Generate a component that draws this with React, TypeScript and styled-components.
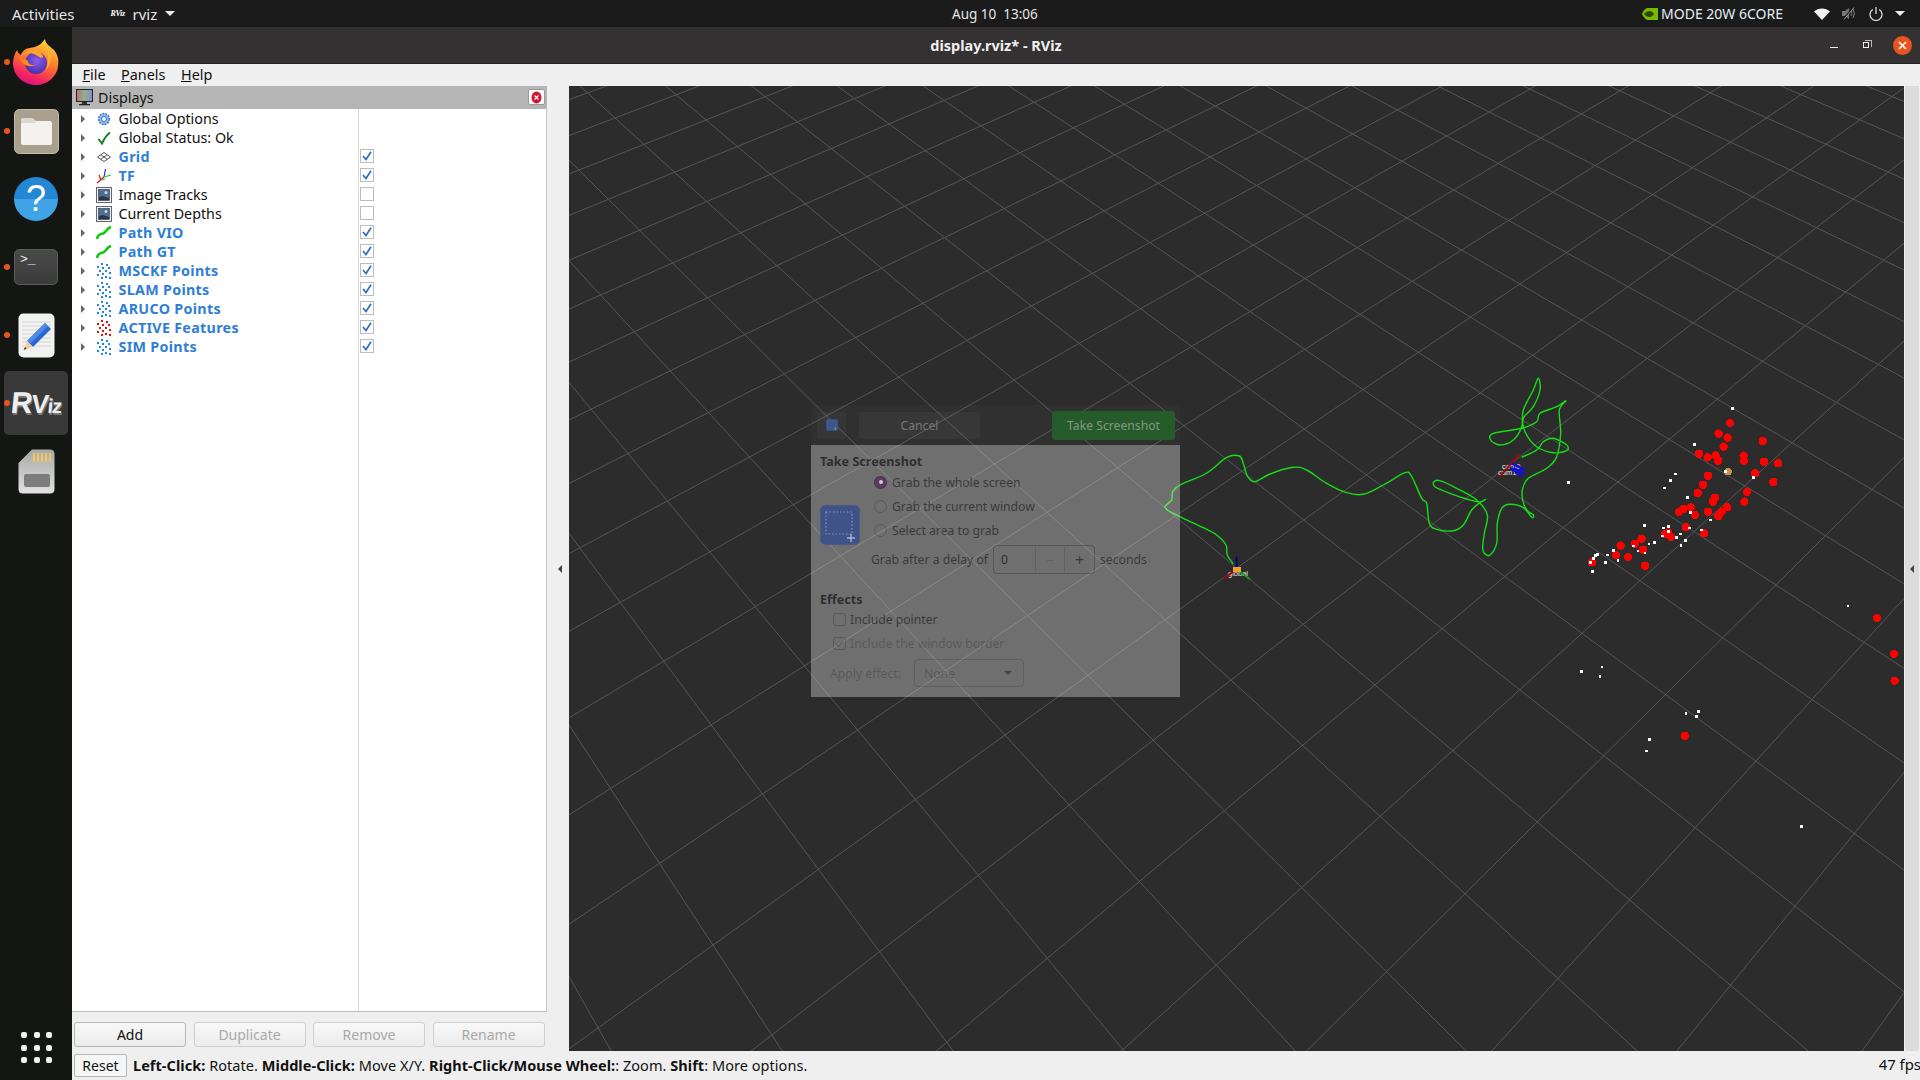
import React from "react";
import styled, { createGlobalStyle } from "styled-components";

const UI = `"Noto Sans", "Liberation Sans", sans-serif`;

const Global = createGlobalStyle`
  html, body { margin: 0; padding: 0; background: #141514; overflow: hidden; }
  * { box-sizing: border-box; }
`;

/* ---------- layout ---------- */
const Screen = styled.div`
  width: 1920px; height: 1080px; display: flex; flex-direction: column;
  font-family: ${UI}; overflow: hidden;
`;
const TopBar = styled.header`
  height: 27px; flex: none; background: #1b1b1b; color: #e6e6e6; display: flex; align-items: center;
  font-size: 15px;
`;
const TopLeft = styled.div`
  flex: 0 0 952px; display: flex; align-items: center; padding-left: 12px;
`;
const AppMenu = styled.div`
  margin-left: 36px; display: flex; align-items: center; gap: 8px;
`;
const TinyLogo = styled.span`
  font: italic bold 8px "Liberation Serif", serif; color: #fff; letter-spacing: -0.3px; width: 14px;
`;
const Caret = styled.span`
  width: 0; height: 0; border-left: 5px solid transparent; border-right: 5px solid transparent;
  border-top: 5px solid #eee;
`;
const Clock = styled.div`white-space: pre; font-size: 13.5px;`;
const TopRight = styled.div`
  margin-left: auto; display: flex; align-items: center; padding-right: 15px;
`;
const ModeText = styled.span`margin: 0 31px 0 3px; font-size: 14px; color: #e4eef8;`;
const TrayGap = styled.span<{ $w: number }>`display: inline-block; width: ${p => p.$w}px;`;

const Body = styled.div`flex: 1; display: flex; min-height: 0;`;
const Dock = styled.nav`
  width: 72px; flex: none; background: #141614; display: flex; flex-direction: column; align-items: center;
  position: relative;
`;
const DockSlot = styled.div<{ $active?: boolean; $h: number }>`
  width: 64px; height: ${p => p.$h}px; flex: none; border-radius: 5px; position: relative;
  display: flex; align-items: center; justify-content: center;
  margin-top: ${p => (p.$active ? 2 : 0)}px;
  background: ${p => (p.$active ? "#393939" : "transparent")};
`;
const RunDot = styled.span`
  position: absolute; left: -0.5px; top: 50%; margin-top: -3px; width: 6px; height: 6px; border-radius: 50%;
  background: #e95420;
`;
const HelpMark = styled.span`
  font: 36px "Liberation Sans", sans-serif; color: #fff;
`;
const HelpIcon = styled.div`
  width: 44px; height: 44px; border-radius: 50%; display: flex; align-items: center; justify-content: center;
  background: linear-gradient(#2387d6 0 50%, #3fa3e6 50% 100%);
`;
const TermIcon = styled.div`
  width: 44px; height: 36px; border-radius: 5px; background: linear-gradient(#4a4a4a, #3a3a3a);
  border: 1px solid #5a5a5a; color: #eee; font: 13px/16px "Liberation Mono", monospace; padding: 2px 5px;
`;
const RvizLogo = styled.div`
  display: flex; align-items: baseline; color: #eee; font-family: "Liberation Sans", sans-serif; font-weight: bold;
  transform: skewX(-6deg); text-shadow: 1px 2px 0 #777;
`;
const RvizPart = styled.span<{ $s: number }>`font-size: ${p => p.$s}px; line-height: 1; letter-spacing: -1px;`;
const AppsGrid = styled.div`
  position: absolute; left: 21px; top: 1005px; display: grid; grid-template-columns: repeat(3, 6px); gap: 6.5px;
`;
const AppDot = styled.span`width: 6px; height: 6px; border-radius: 2px; background: #f2f2f2;`;

const Win = styled.div`flex: 1; display: flex; flex-direction: column; min-width: 0; background: #efefef;`;
const TitleBar = styled.div`
  height: 37px; flex: none; background: #333132; border-bottom: 1px solid #222; color: #f0f0f0;
  font-size: 14.5px; font-weight: bold; display: flex; align-items: center; justify-content: center; position: relative;
`;
const WinButtons = styled.div`
  position: absolute; right: 8px; top: 0; height: 36px; display: flex; align-items: center; gap: 0;
`;
const MinBtn = styled.span`width: 8px; height: 1.5px; background: #eee; margin: 5px 25px 0 0;`;
const RestoreBtn = styled.span`
  width: 6px; height: 6px; border: 1px solid #eee; margin: 0 24px 0 0; position: relative;
  &::after { content: ""; position: absolute; left: 1px; top: -3px; width: 6px; height: 6px;
    border-top: 1px solid #bbb; border-right: 1px solid #bbb; }
`;
const CloseBtn = styled.span`
  width: 19px; height: 19px; border-radius: 50%; background: #e95420; display: flex; align-items: center; justify-content: center;
`;
const MenuBar = styled.div`
  height: 22px; flex: none; display: flex; align-items: center; gap: 15.5px; padding: 0 0 2px 10.5px; font-size: 14.4px;
  color: #111; background: #efefef;
`;
const Mnemonic = styled.span`text-decoration: underline;`;
const Main = styled.div`flex: 1; display: flex; min-height: 0;`;

const LeftPanel = styled.aside`
  width: 475px; flex: none; display: flex; flex-direction: column; background: #efefef;
`;
const PanelHead = styled.div`
  height: 23px; flex: none; background: #b5b5b5; display: flex; align-items: center; padding: 0 2px 1px 4px; gap: 5px;
  font-size: 14.3px; color: #111;
`;
const PanelClose = styled.span`
  margin-left: auto; width: 17px; height: 16px; background: #fff; border: 1px solid #9a9a9a; border-radius: 2px;
  display: flex; align-items: center; justify-content: center;
`;
const Tree = styled.div`
  flex: 1; background: #fff; border-right: 1px solid #c8c8c8; border-bottom: 1px solid #bdbdbd; position: relative;
  &::after { content: ""; position: absolute; left: 286px; top: 0; bottom: 0; width: 1px; background: #dcdcdc; }
`;
const Row = styled.div`height: 19px; display: flex; align-items: center; position: relative;`;
const Arrow = styled.span`
  margin-left: 9px; width: 0; height: 0; border-top: 4px solid transparent; border-bottom: 4px solid transparent;
  border-left: 4.5px solid #666; flex: none;
`;
const RowIcon = styled.span`
  margin-left: 10px; width: 18px; height: 18px; flex: none; display: flex; align-items: center; justify-content: center;
`;
const RowName = styled.span<{ $on: boolean }>`
  margin-left: 5.5px; width: 239px; font-size: 14.3px; white-space: nowrap;
  font-weight: ${p => (p.$on ? 700 : 400)}; color: ${p => (p.$on ? "#2f7ed4" : "#111")};
  letter-spacing: ${p => (p.$on ? "0.3px" : "0")};
`;
const Check = styled.span`
  width: 14px; height: 14px; margin: -1px 0 0 2px; border: 1px solid #bcbcbc; background: #fff; display: flex; align-items: center; justify-content: center;
  flex: none;
`;
const ButtonRow = styled.div`
  height: 39px; flex: none; display: flex; gap: 7.5px; padding: 10px 0 4px 2px;
`;
const PanelButton = styled.button<{ $off?: boolean }>`
  width: 112px; height: 25px; border: 1px solid ${p => (p.$off ? "#cfcfcf" : "#b5b5b5")}; border-radius: 3px;
  background: linear-gradient(#f8f8f8, #ececec); font: 14px ${UI}; color: ${p => (p.$off ? "#a9a9a9" : "#111")}; padding: 0;
`;
const Sash = styled.div`
  width: 22px; flex: none; display: flex; align-items: center; justify-content: center; background: #efefef; padding-left: 4px;
`;
const SashArrow = styled.span`
  width: 0; height: 0; border-top: 4px solid transparent; border-bottom: 4px solid transparent; border-right: 4px solid #444;
`;
const Viewport = styled.main`
  width: 1335px; flex: none; background: #2c2c2c; position: relative; overflow: hidden;
`;
const Scene = styled.svg`display: block; width: 1335px; height: 965px;`;
const RightSash = styled.div`
  flex: 1; background: #dcdcdc; margin-left: 1px; border-radius: 0 0 3px 3px; display: flex; align-items: center; justify-content: center;
  border-right: 1px solid #efefef;
`;
const StatusBar = styled.footer`
  height: 29px; flex: none; display: flex; align-items: center; padding: 0 0 2px 2px; font-size: 14.5px; color: #111; background: #efefef;
`;
const ResetBtn = styled.button`
  width: 53px; height: 23px; border: 1px solid #b5b5b5; border-radius: 2px; background: #f6f6f6;
  font: 14px ${UI}; color: #111; padding: 0; margin-top: 2px;
`;
const StatusText = styled.span`margin-left: 6px; letter-spacing: 0.05px; white-space: pre;`;
const Fps = styled.span`margin: 0 -1px 2px auto; font-size: 14.9px;`;

/* ---------- fading screenshot dialog, lying over the scene ---------- */
const Dialog = styled.section`
  position: absolute; left: 242px; top: 319px; width: 369px; height: 292px; display: flex; flex-direction: column;
  font-size: 12.2px;
`;
const DlgHead = styled.div`
  height: 40px; flex: none; background: rgba(255,255,255,0.025); display: flex; align-items: center; padding: 0 5px 0 6px;
  border-radius: 6px 6px 0 0;
`;
const DlgIconBtn = styled.div`
  width: 29px; height: 27px; background: rgba(255,255,255,0.03); border-radius: 3px; display: flex; align-items: center; justify-content: center;
`;
const DlgCancel = styled.div`
  margin-left: 13px; width: 121px; height: 27px; background: rgba(255,255,255,0.035); border-radius: 3px;
  color: #777; display: flex; align-items: center; justify-content: center;
`;
const DlgTake = styled.div`
  margin-left: auto; width: 123px; height: 29px; background: #255a2a; border-radius: 3px;
  color: #7f9a80; display: flex; align-items: center; justify-content: center;
`;
const DlgBody = styled.div`
  flex: 1; background: rgba(240,240,240,0.34); padding: 7px 0 0 9px; color: rgba(0,0,0,0.5); position: relative;
`;
const DlgHeading = styled.div`font-weight: 700; font-size: 12.6px; height: 19px; line-height: 19px; color: rgba(0,0,0,0.6);`;
const DlgTop = styled.div`display: flex; margin-top: -1px;`;
const DlgLargeIcon = styled.div`width: 40px; height: 40px; margin-top: 35px; flex: none;`;
const DlgOptions = styled.div`margin-left: 14px; display: flex; flex-direction: column;`;
const RadioRow = styled.div`height: 24px; display: flex; align-items: center; gap: 5px; margin-left: 0;`;
const Radio = styled.span<{ $on?: boolean }>`
  width: 13px; height: 13px; border-radius: 50%; border: 1px solid rgba(0,0,0,${p => (p.$on ? 0.2 : 0.18)});
  background: ${p => (p.$on ? "#5c3a5f" : "transparent")}; display: flex; align-items: center; justify-content: center;
  &::after { content: ""; width: 4px; height: 4px; border-radius: 50%; background: ${p => (p.$on ? "#d8c8d8" : "transparent")}; }
`;
const DelayRow = styled.div`display: flex; align-items: center; height: 29px; margin: 3px 0 0 -3px; gap: 5px; font-size: 12.2px;`;
const Spin = styled.div`
  width: 102px; height: 29px; border: 1px solid rgba(0,0,0,0.22); border-radius: 4px; display: flex; align-items: center;
`;
const SpinValue = styled.span`width: 41px; padding-left: 7px; color: rgba(0,0,0,0.6);`;
const SpinBtn = styled.span<{ $off?: boolean }>`
  width: 30px; height: 100%; border-left: 1px solid rgba(0,0,0,0.1); display: flex; align-items: center; justify-content: center;
  font-size: 16px; color: rgba(0,0,0,${p => (p.$off ? 0.12 : 0.5)});
`;
const EffectsHead = styled(DlgHeading)`margin-top: 16px; height: 17px;`;
const CheckRow = styled.div<{ $off?: boolean }>`
  height: 24px; display: flex; align-items: center; gap: 4px; margin-left: 13px;
  color: rgba(0,0,0,${p => (p.$off ? 0.22 : 0.5)});
`;
const DlgCheck = styled.span`
  width: 13px; height: 13px; border: 1px solid rgba(0,0,0,0.2); border-radius: 3px; display: flex; align-items: center; justify-content: center;
`;
const EffectRow = styled.div`
  display: flex; align-items: center; gap: 13px; margin: 4px 0 0 10px; color: rgba(0,0,0,0.22);
`;
const EffectSelect = styled.div`
  width: 110px; height: 28px; border: 1px solid rgba(0,0,0,0.14); border-radius: 4px; display: flex; align-items: center;
  padding: 0 11px 0 9px; justify-content: space-between;
`;
const SelectCaret = styled.span`
  width: 0; height: 0; border-left: 4px solid transparent; border-right: 4px solid transparent; border-top: 4px solid rgba(0,0,0,0.4);
`;

/* ---------- scene geometry ---------- */
const gridRefs: number[][] = [
  [1, 0, 1246.7, 386.7], [0, 0, 1183.3, 425], [0, 3, 1370, 571.7], [2, 4, 1563.3, 528.3], [1, 4, 1503.3, 576.7],
  [0, 5, 1520, 690], [0, 6, 1604, 756], [0, 7, 1696, 828.3], [0, 8, 1795.5, 906],
  [1, 6, 1665, 694.3], [1, 7, 1755.6, 761.7], [2, 7, 1812, 700], [1, 8, 1854.3, 833.3],
  [-1, 5, 1452.5, 750.7], [-1, 6, 1537.5, 821.7], [-1, 7, 1630.2, 900], [-1, 8, 1730.3, 985],
  [-2, 5, 1380.4, 816.7], [-2, 6, 1465, 894], [-2, 7, 1558, 978.3],
  [-3, 5, 1302, 887], [-3, 6, 1386, 971.7], [-4, 5, 1216, 965],
  [-1, 4, 1374.5, 684.3], [-2, 4, 1302, 745], [-3, 4, 1223.9, 810.7], [-2, 3, 1230.8, 680],
  [-1, -2, 1013.4, 380], [-2, -3, 898.7, 376.7], [-3, -4, 784.8, 374], [-4, -5, 670, 371],
  [0, -2, 1079, 343.3], [-1, -3, 967.4, 340.7], [-2, -4, 856, 337], [-3, -5, 744.6, 335], [-4, -6, 634.8, 331.7],
  [0, -3, 1031, 306], [-1, -4, 922.8, 302.7], [-2, -5, 815.6, 300.7], [-3, -6, 707.6, 297.7], [-4, -7, 600.4, 295.7],
  [1, -3, 1092.9, 273.3], [0, -4, 986.6, 271], [-1, -5, 881.7, 268.3], [-2, -6, 776.8, 266], [-3, -7, 672.8, 263.3],
  [1, -4, 1046.9, 240], [0, -5, 944.2, 237.3], [-1, -6, 843.8, 234.3], [-2, -7, 741, 232.7], [-3, -8, 639.3, 230],
  [1, -5, 1004.5, 208.3], [0, -6, 905, 206.7], [-1, -7, 805.8, 204], [-2, -8, 706.7, 202.3], [-3, -9, 607, 199.3],
  [2, -5, 1060, 181], [1, -6, 964.3, 179], [0, -7, 867, 176.7], [-1, -8, 770, 174.3], [-2, -9, 674, 171.7],
];

function fitHomography(): number[] {
  const n = 8;
  const A = Array.from({ length: n }, () => new Array(n + 1).fill(0));
  const add = (r: number[], b: number) => {
    for (let i = 0; i < n; i++) {
      for (let j = 0; j < n; j++) A[i][j] += r[i] * r[j];
      A[i][n] += r[i] * b;
    }
  };
  for (const [u0, v0, x0, y0] of gridRefs) {
    const U = u0 / 10, V = v0 / 10, X = (x0 - 1200) / 500, Y = (y0 - 500) / 500;
    add([U, V, 1, 0, 0, 0, -X * U, -X * V], X);
    add([0, 0, 0, U, V, 1, -Y * U, -Y * V], Y);
  }
  for (let c = 0; c < n; c++) {
    let p = c;
    for (let r = c + 1; r < n; r++) if (Math.abs(A[r][c]) > Math.abs(A[p][c])) p = r;
    [A[c], A[p]] = [A[p], A[c]];
    for (let r = 0; r < n; r++) {
      if (r === c) continue;
      const f = A[r][c] / A[c][c];
      for (let k = c; k <= n; k++) A[r][k] -= f * A[c][k];
    }
  }
  return A.map((row, i) => row[n] / row[i]);
}
const H = fitHomography();
function project(u: number, v: number): [number, number] | null {
  const U = u / 10, V = v / 10;
  const w = H[6] * U + H[7] * V + 1;
  if (w < 0.03) return null;
  return [((H[0] * U + H[1] * V + H[2]) / w) * 500 + 1200, ((H[3] * U + H[4] * V + H[5]) / w) * 500 + 500];
}
function gridLines(): number[][] {
  const out: number[][] = [];
  const inside = (p: [number, number] | null): p is [number, number] =>
    !!p && p[0] > 300 && p[0] < 2200 && p[1] > -100 && p[1] < 1300;
  const trace = (at: (t: number) => [number, number] | null) => {
    let a: [number, number] | null = null, b: [number, number] | null = null;
    for (let t = -80; t <= 80; t += 0.1) {
      const p = at(t);
      if (inside(p)) { if (!a) a = p; b = p; }
    }
    if (a && b && a !== b) out.push([a[0], a[1], b[0], b[1]]);
  };
  for (let k = -50; k <= 50; k++) {
    trace(t => project(k, t));
    trace(t => project(t, k));
  }
  return out;
}
const LINES = gridLines();

const z5 = (x: number, y: number): [number, number] => [1150 + x / 3, 360 + y / 3];
const pathRaw: number[][] = [
  [250,612],[232,585],[228,555],[200,525],[160,503],[100,475],[60,455],[45,440],[65,420],[68,395],[90,375],[160,345],[190,325],[230,292],[268,288],[280,310],[293,350],[315,365],[360,342],[430,322],[470,330],[530,370],[590,398],[640,403],[700,375],[765,338],[785,350],[815,415],[830,430],[838,490],[860,508],[910,512],[940,495],[965,450],[990,428],[1007,418],[990,426],[960,420],[900,400],[855,380],[852,365],[870,362],[920,385],[980,420],[1012,465],[1003,520],[998,560],[1003,580],[1020,585],[1040,550],[1042,490],[1055,445],[1080,433],[1120,443],[1145,472],[1150,465],[1130,450],[1118,420],[1118,385],[1135,355],[1190,325],[1220,290],[1232,220],[1228,150],[1248,122],[1220,140],[1170,160],[1160,185],[1115,205],[1030,220],[1022,240],[1050,255],[1090,240],[1115,200],[1120,150],[1150,90],[1165,55],[1170,90],[1150,140],[1120,175],[1125,215],[1160,260],[1210,278],[1250,272],[1250,255],[1210,235],[1180,245],[1160,270],[1115,292],
];
function smoothPath(pts: [number, number][]): string {
  let d = `M${pts[0][0]} ${pts[0][1]}`;
  for (let i = 0; i < pts.length - 1; i++) {
    const p0 = pts[Math.max(0, i - 1)], p1 = pts[i], p2 = pts[i + 1], p3 = pts[Math.min(pts.length - 1, i + 2)];
    const c1 = [p1[0] + (p2[0] - p0[0]) / 6, p1[1] + (p2[1] - p0[1]) / 6];
    const c2 = [p2[0] - (p3[0] - p1[0]) / 6, p2[1] - (p3[1] - p1[1]) / 6];
    d += ` C${c1[0].toFixed(1)} ${c1[1].toFixed(1)} ${c2[0].toFixed(1)} ${c2[1].toFixed(1)} ${p2[0].toFixed(1)} ${p2[1].toFixed(1)}`;
  }
  return d;
}
const GREEN_PATH = smoothPath(pathRaw.map(([x, y]) => z5(x, y)));

const z6 = ([x, y]: number[]): number[] => [1560 + x / 3, 390 + y / 3];
const RED: number[][] = [
  ...[[510,99],[476,131],[503,143],[608,153],[491,170],[417,191],[443,202],[467,196],[474,212],[551,197],[552,213],[612,215],[654,220],[585,250],[640,276],[444,257],[429,284],[413,309],[561,306],[553,335],[465,323],[459,335],[501,352],[485,365],[478,373],[475,378],[392,352],[370,357],[357,366],[405,375],[444,365],[378,412],[432,430],[325,428],[315,433],[333,441],[245,446],[225,461],[182,467],[249,479],[168,495],[204,501],[96,517],[255,527]].map(z6),
  [1877, 618], [1894, 654], [1894.6, 680.7], [1685, 735.7],
];
const WHITE: number[][] = [
  ...[[517,55],[403,163],[346,252],[332,271],[313,294],[25,277],[383,323],[392,368],[452,390],[253,406],[311,414],[325,409],[388,414],[362,432],[376,451],[363,466],[349,442],[307,438],[283,458],[267,462],[220,468],[234,483],[255,489],[160,482],[142,495],[112,493],[106,497],[100,505],[91,517],[137,517],[174,511],[97,544],[580,263],[424,420],[325,424],[497,244]].map(z6),
  [1581.5,671.3],[1602,666.7],[1600,676.3],[1686,713.3],[1698.6,711.3],[1696.3,716.3],[1649.5,739.3],[1646.3,750.7],[1801.5,826.3],[1848,606],
];

/* ---------- small drawings ---------- */
const PointsIcon = ({ c }: { c: string }) => {
  const dots = [[6,1],[11,2],[2,4],[7,5],[13,5],[4,8],[10,8],[14,10],[7,11],[2,12],[10,14],[6,15],[14,15]];
  return (
    <svg width="16" height="16" viewBox="0 0 16 16" shapeRendering="crispEdges">
      {dots.map(([x, y], i) => <rect key={i} x={x - 1} y={y - 1} width="2" height="2" fill={c} />)}
    </svg>
  );
};
const PathIcon = () => (
  <svg width="16" height="14" viewBox="0 0 16 14"><path d="M1 13 C2 7 5 9 8 7 C11 5 11 2 15 1" fill="none" stroke="#10c810" strokeWidth="2.6" /></svg>
);
const ImageIcon = () => (
  <svg width="16" height="16" viewBox="0 0 16 16">
    <rect x="0.5" y="0.5" width="15" height="15" fill="#eef" stroke="#666" />
    <rect x="2.5" y="2.5" width="11" height="11" fill="#4d6f96" stroke="#333" strokeWidth="0.6" />
    <path d="M3 13 L3 10 L7 9 L13 11 L13 13 Z" fill="#2c3645" />
    <circle cx="10" cy="5.5" r="1.5" fill="#c9d6e6" />
  </svg>
);
const GridIcon = () => (
  <svg width="14" height="10" viewBox="0 0 14 10" fill="none" stroke="#555">
    <path d="M7 .5 13.5 5 7 9.5 .5 5Z M3.7 2.8 10.3 7.2 M10.3 2.8 3.7 7.2" />
  </svg>
);
const TfIcon = () => (
  <svg width="16" height="16" viewBox="0 0 16 16" fill="none" strokeWidth="1.2">
    <path d="M8 9 L9.5 1" stroke="#2222dd" /><path d="M8 9 L15 7" stroke="#22c822" />
    <path d="M8 9 L1 15" stroke="#e01010" /><path d="M3 7 L5 12" stroke="#e01010" /><path d="M5 12 L9 11" stroke="#22c822" />
  </svg>
);
const GearIcon = () => (
  <svg width="14" height="14" viewBox="0 0 14 14">
    <circle cx="7" cy="7" r="5.4" fill="#9dbbea" stroke="#3f78cc" strokeWidth="1.6" strokeDasharray="1.9 1" />
    <circle cx="7" cy="7" r="2.6" fill="#e6eefb" stroke="#3f78cc" />
  </svg>
);
const CheckMark = () => (
  <svg width="14" height="14" viewBox="0 0 14 14"><path d="M1.5 8 L5 12.5 C7 8 9 4.5 13 1.5" fill="none" stroke="#1f7a2a" strokeWidth="2" /></svg>
);
const BoxTick = () => (
  <svg width="10" height="10" viewBox="0 0 10 10"><path d="M1 5 L4 8.5 L9 .8" fill="none" stroke="#2f6fb5" strokeWidth="1.7" /></svg>
);
const Monitor = () => (
  <svg width="17" height="17" viewBox="0 0 17 17">
    <defs>
      <linearGradient id="mon" x1="0" x2="1" y1="0" y2="0">
        <stop offset="0" stopColor="#c87070" /><stop offset=".5" stopColor="#8fb08f" /><stop offset="1" stopColor="#8a88d8" />
      </linearGradient>
    </defs>
    <rect x=".5" y=".5" width="16" height="12" fill="url(#mon)" stroke="#222" />
    <rect x="6" y="13" width="5" height="2" fill="#333" /><rect x="3" y="15" width="11" height="1.3" fill="#222" />
  </svg>
);
const Firefox = () => (
  <svg width="46" height="46" viewBox="0 0 46 46">
    <defs>
      <linearGradient id="ffA" x1=".7" y1="0" x2=".3" y2="1">
        <stop offset="0" stopColor="#ffd53a" /><stop offset=".45" stopColor="#ff7a2a" /><stop offset=".8" stopColor="#f5255f" /><stop offset="1" stopColor="#d40f8a" />
      </linearGradient>
      <radialGradient id="ffB" cx=".55" cy=".4" r=".7">
        <stop offset="0" stopColor="#8e5be8" /><stop offset="1" stopColor="#3a2aa6" />
      </radialGradient>
    </defs>
    <path d="M32 0 C33 6 37 7 41 11 C45 16 46 21 45 27 C44 38 34 46 23 46 C10 46 0 36 0 24 C0 19 2 14 4 11 C5 14 6 15 8 16 C9 12 13 9 17 9 C23 8 27 7 32 0Z" fill="url(#ffA)" />
    <circle cx="23" cy="24" r="11" fill="url(#ffB)" />
    <path d="M6 19 C10 14 18 13 23 16 C27 18 30 21 30 17 C28 13 25 12 20 12 C15 12 9 14 6 19Z" fill="#ffa52e" />
    <path d="M6 18 C10 20 13 20 15 22 C15 26 20 27 24 25 C20 28 13 28 10 24 C8 22 7 20 6 18Z" fill="#ff8a1f" />
    <path d="M33 8 C40 14 38 26 33 31 C36 23 36 15 33 8Z" fill="#ffb32b" />
  </svg>
);
const Files = () => (
  <svg width="45" height="45" viewBox="0 0 45 45">
    <rect x=".5" y=".5" width="44" height="44" rx="5" fill="#a89f8c" stroke="#c4bcab" />
    <path d="M7 12 Q7 9 10 9 H18 L22 12 H36 Q38 12 38 14 V34 Q38 36 36 36 H9 Q7 36 7 34Z" fill="#f4f2ee" />
    <path d="M7 12 Q7 9 10 9 H18 L22 12 L21 14 H7Z" fill="#dcd8cf" />
  </svg>
);
const Editor = () => (
  <svg width="37" height="45" viewBox="0 0 37 45">
    <rect x=".5" y=".5" width="36" height="44" rx="5" fill="#f2f2f2" />
    <path d="M4 9H33M4 13H33M4 17H33M4 21H33M4 25H33M4 29H33M4 33H33" stroke="#d4d4d4" />
    <path d="M27 10 L33 16 L15 34 L9 28Z" fill="#2a66d0" />
    <path d="M27 10 L30 13 L12 31 L9 28Z" fill="#4c8ae8" />
    <path d="M9 28 L15 34 L6 37Z" fill="#f2cfa0" /><path d="M7 34 L8.5 35.8 L5.5 37Z" fill="#333" />
  </svg>
);
const SdCard = () => (
  <svg width="37" height="45" viewBox="0 0 37 45">
    <defs><linearGradient id="sd" x1="0" y1="0" x2="0" y2="1"><stop offset="0" stopColor="#a8a8a8" /><stop offset="1" stopColor="#e2e2e2" /></linearGradient></defs>
    <path d="M14 .5 H32 Q36.5 .5 36.5 5 V40 Q36.5 44.5 32 44.5 H5 Q.5 44.5 .5 40 V14Z" fill="url(#sd)" />
    <path d="M16 4V13M20 4V13M24 4V13M28 4V13M32 4V13" stroke="#f0c95a" strokeWidth="2" />
    <rect x="6" y="25" width="26" height="13" rx="2" fill="#7c7c7c" />
  </svg>
);
const Nvidia = () => (
  <svg width="16" height="12" viewBox="0 0 16 12">
    <path d="M5 0 H16 V12 H5 C2 10 1 8 0 6 C1 3 3 1 5 0Z" fill="#76b900" />
    <path d="M2 6 C5 2 10 2 12 6 C10 10 5 10 2 6Z M5 6 C7 4 9 4 10 6 C9 8 7 8 5 6Z" fill="#2e4a00" />
  </svg>
);
const Wifi = () => (
  <svg width="16" height="12" viewBox="0 0 16 12"><path d="M0 3.5 C4.5 -.5 11.5 -.5 16 3.5 L8 12Z" fill="#f2f2f2" /></svg>
);
const Speaker = () => (
  <svg width="15" height="13" viewBox="0 0 15 13" fill="none">
    <path d="M0 4H3L7 1V12L3 9H0Z" fill="#777" /><path d="M9 4 Q11 6.5 9 9 M11 2 Q14 6.5 11 11" stroke="#888" /><path d="M1 12.5 L11 .5" stroke="#1b1b1b" strokeWidth="1.5" /><path d="M2 12.5 L12 .5" stroke="#999" />
  </svg>
);
const Power = () => (
  <svg width="14" height="14" viewBox="0 0 14 14" fill="none" stroke="#e8e8e8" strokeWidth="1.2">
    <path d="M7 0V7" /><path d="M3.8 2.4 A6 6 0 1 0 10.2 2.4" />
  </svg>
);
const CrossWhite = () => (
  <svg width="9" height="9" viewBox="0 0 9 9"><path d="M1 1 8 8M8 1 1 8" stroke="#fff" strokeWidth="1.6" /></svg>
);
const RedClose = () => (
  <svg width="11" height="13" viewBox="0 0 11 13">
    <ellipse cx="5.5" cy="6.5" rx="5" ry="6" fill="#d3122e" /><path d="M3.5 4.5 7.5 8.5M7.5 4.5 3.5 8.5" stroke="#fff" strokeWidth="1.1" />
  </svg>
);
const ScreenshotGlyph = ({ s }: { s: number }) => (
  <svg width={s} height={s} viewBox="0 0 40 40">
    <rect x=".5" y=".5" width="39" height="39" rx="5" fill="#3f5389" stroke="#4a5a80" />
    <rect x="6" y="7" width="26" height="22" fill="none" stroke="#8a96b8" strokeWidth="1.2" strokeDasharray="1.5 2" />
    <path d="M31 29V37M27 33H35" stroke="#aab4cf" strokeWidth="1.4" />
  </svg>
);

type Item = { name: string; on: boolean; icon: React.ReactNode; check?: boolean };
const ITEMS: Item[] = [
  { name: "Global Options", on: false, icon: <GearIcon /> },
  { name: "Global Status: Ok", on: false, icon: <CheckMark /> },
  { name: "Grid", on: true, icon: <GridIcon />, check: true },
  { name: "TF", on: true, icon: <TfIcon />, check: true },
  { name: "Image Tracks", on: false, icon: <ImageIcon />, check: false },
  { name: "Current Depths", on: false, icon: <ImageIcon />, check: false },
  { name: "Path VIO", on: true, icon: <PathIcon />, check: true },
  { name: "Path GT", on: true, icon: <PathIcon />, check: true },
  { name: "MSCKF Points", on: true, icon: <PointsIcon c="#1e88e5" />, check: true },
  { name: "SLAM Points", on: true, icon: <PointsIcon c="#1e88e5" />, check: true },
  { name: "ARUCO Points", on: true, icon: <PointsIcon c="#1e88e5" />, check: true },
  { name: "ACTIVE Features", on: true, icon: <PointsIcon c="#e01010" />, check: true },
  { name: "SIM Points", on: true, icon: <PointsIcon c="#1e88e5" />, check: true },
];

const seg = (a: number[], b: number[]) => {
  const p = z5(a[0], a[1]), q = z5(b[0], b[1]);
  return { x1: p[0], y1: p[1], x2: q[0], y2: q[1] };
};

export default function App() {
  return (
    <Screen>
      <Global />
      <TopBar>
        <TopLeft>
          <span>Activities</span>
          <AppMenu><TinyLogo>RViz</TinyLogo><span>rviz</span><Caret /></AppMenu>
        </TopLeft>
        <Clock>Aug 10  13:06</Clock>
        <TopRight>
          <Nvidia /><ModeText>MODE 20W 6CORE</ModeText>
          <Wifi /><TrayGap $w={12} /><Speaker /><TrayGap $w={12} /><Power /><TrayGap $w={12} /><Caret />
        </TopRight>
      </TopBar>
      <Body>
        <Dock>
          <DockSlot $h={70}><RunDot /><Firefox /></DockSlot>
          <DockSlot $h={68}><RunDot /><Files /></DockSlot>
          <DockSlot $h={68}><HelpIcon><HelpMark>?</HelpMark></HelpIcon></DockSlot>
          <DockSlot $h={68}><RunDot /><TermIcon>{">_"}</TermIcon></DockSlot>
          <DockSlot $h={68}><RunDot /><Editor /></DockSlot>
          <DockSlot $h={64} $active><RunDot /><RvizLogo><RvizPart $s={30}>R</RvizPart><RvizPart $s={26}>V</RvizPart><RvizPart $s={20}>iz</RvizPart></RvizLogo></DockSlot>
          <DockSlot $h={72}><SdCard /></DockSlot>
          <AppsGrid>{Array.from({ length: 9 }, (_, i) => <AppDot key={i} />)}</AppsGrid>
        </Dock>
        <Win>
          <TitleBar>
            display.rviz* - RViz
            <WinButtons><MinBtn /><RestoreBtn /><CloseBtn><CrossWhite /></CloseBtn></WinButtons>
          </TitleBar>
          <MenuBar>
            <span><Mnemonic>F</Mnemonic>ile</span>
            <span><Mnemonic>P</Mnemonic>anels</span>
            <span><Mnemonic>H</Mnemonic>elp</span>
          </MenuBar>
          <Main>
            <LeftPanel>
              <PanelHead><Monitor />Displays<PanelClose><RedClose /></PanelClose></PanelHead>
              <Tree>
                {ITEMS.map(it => (
                  <Row key={it.name}>
                    <Arrow />
                    <RowIcon>{it.icon}</RowIcon>
                    <RowName $on={it.on}>{it.name}</RowName>
                    {it.check !== undefined && <Check>{it.check && <BoxTick />}</Check>}
                  </Row>
                ))}
              </Tree>
              <ButtonRow>
                <PanelButton>Add</PanelButton>
                <PanelButton $off>Duplicate</PanelButton>
                <PanelButton $off>Remove</PanelButton>
                <PanelButton $off>Rename</PanelButton>
              </ButtonRow>
            </LeftPanel>
            <Sash><SashArrow /></Sash>
            <Viewport>
              <Scene viewBox="569 86 1335 965">
                {LINES.map((l, i) => <line key={i} x1={l[0]} y1={l[1]} x2={l[2]} y2={l[3]} stroke="#565656" strokeWidth="1" />)}
                <path d={GREEN_PATH} fill="none" stroke="#14de14" strokeWidth="1.4" />
                <text x="1228" y="576" fontSize="7.5" fill="#e8e8e8" fontFamily="Liberation Sans">global</text>
                <text x="1502" y="469" fontSize="7.5" fill="#e8e8e8" fontFamily="Liberation Sans">cam0</text>
                <text x="1498" y="475" fontSize="7.5" fill="#e8e8e8" fontFamily="Liberation Sans">cam1</text>
                <g fill="none">
                  <line {...seg([260, 590], [260, 628])} stroke="#00008a" strokeWidth="1.8" />
                  <line {...seg([222, 655], [260, 628])} stroke="#a80000" strokeWidth="1.8" />
                  <line {...seg([260, 628], [300, 658])} stroke="#14a014" strokeWidth="1.8" />
                  <line {...seg([1048, 352], [1108, 282])} stroke="#b00000" strokeWidth="1.8" />
                  <line {...seg([1085, 310], [1125, 330])} stroke="#1010e0" strokeWidth="2.4" />
                  <line {...seg([1090, 325], [1125, 340])} stroke="#1010e0" strokeWidth="2.4" />
                  <line {...seg([1080, 322], [1115, 350])} stroke="#1010e0" strokeWidth="2.4" />
                </g>
                <rect x="1233" y="567" width="8" height="5" fill="#f0a030" />
                <g shapeRendering="crispEdges">
                  {RED.map(([x, y], i) => <circle key={i} cx={x} cy={y} r="4.2" fill="#ff0000" />)}
                  <circle cx={1728} cy={471.7} r="3.8" fill="#c8924a" />
                  {WHITE.map(([x, y], i) => <rect key={i} x={x - 1.2} y={y - 1.2} width="2.6" height="2.6" fill="#ffffff" />)}
                </g>
              </Scene>
              <Dialog>
                <DlgHead>
                  <DlgIconBtn><ScreenshotGlyph s={12} /></DlgIconBtn>
                  <DlgCancel>Cancel</DlgCancel>
                  <DlgTake>Take Screenshot</DlgTake>
                </DlgHead>
                <DlgBody>
                  <DlgHeading>Take Screenshot</DlgHeading>
                  <DlgTop>
                    <DlgLargeIcon><ScreenshotGlyph s={40} /></DlgLargeIcon>
                    <DlgOptions>
                      <RadioRow><Radio $on />Grab the whole screen</RadioRow>
                      <RadioRow><Radio />Grab the current window</RadioRow>
                      <RadioRow><Radio />Select area to grab</RadioRow>
                      <DelayRow>
                        <span>Grab after a delay of</span>
                        <Spin><SpinValue>0</SpinValue><SpinBtn $off>−</SpinBtn><SpinBtn>+</SpinBtn></Spin>
                        <span>seconds</span>
                      </DelayRow>
                    </DlgOptions>
                  </DlgTop>
                  <EffectsHead>Effects</EffectsHead>
                  <CheckRow><DlgCheck />Include pointer</CheckRow>
                  <CheckRow $off><DlgCheck><svg width="9" height="9" viewBox="0 0 9 9"><path d="M1 4.5 3.5 7.5 8 1.5" fill="none" stroke="rgba(0,0,0,.3)" /></svg></DlgCheck>Include the window border</CheckRow>
                  <EffectRow>
                    <span>Apply effect:</span>
                    <EffectSelect><span>None</span><SelectCaret /></EffectSelect>
                  </EffectRow>
                </DlgBody>
              </Dialog>
            </Viewport>
            <RightSash><SashArrow /></RightSash>
          </Main>
          <StatusBar>
            <ResetBtn>Reset</ResetBtn>
            <StatusText><b>Left-Click:</b> Rotate. <b>Middle-Click:</b> Move X/Y. <b>Right-Click/Mouse Wheel:</b>: Zoom. <b>Shift</b>: More options.</StatusText>
            <Fps>47 fps</Fps>
          </StatusBar>
        </Win>
      </Body>
    </Screen>
  );
}
